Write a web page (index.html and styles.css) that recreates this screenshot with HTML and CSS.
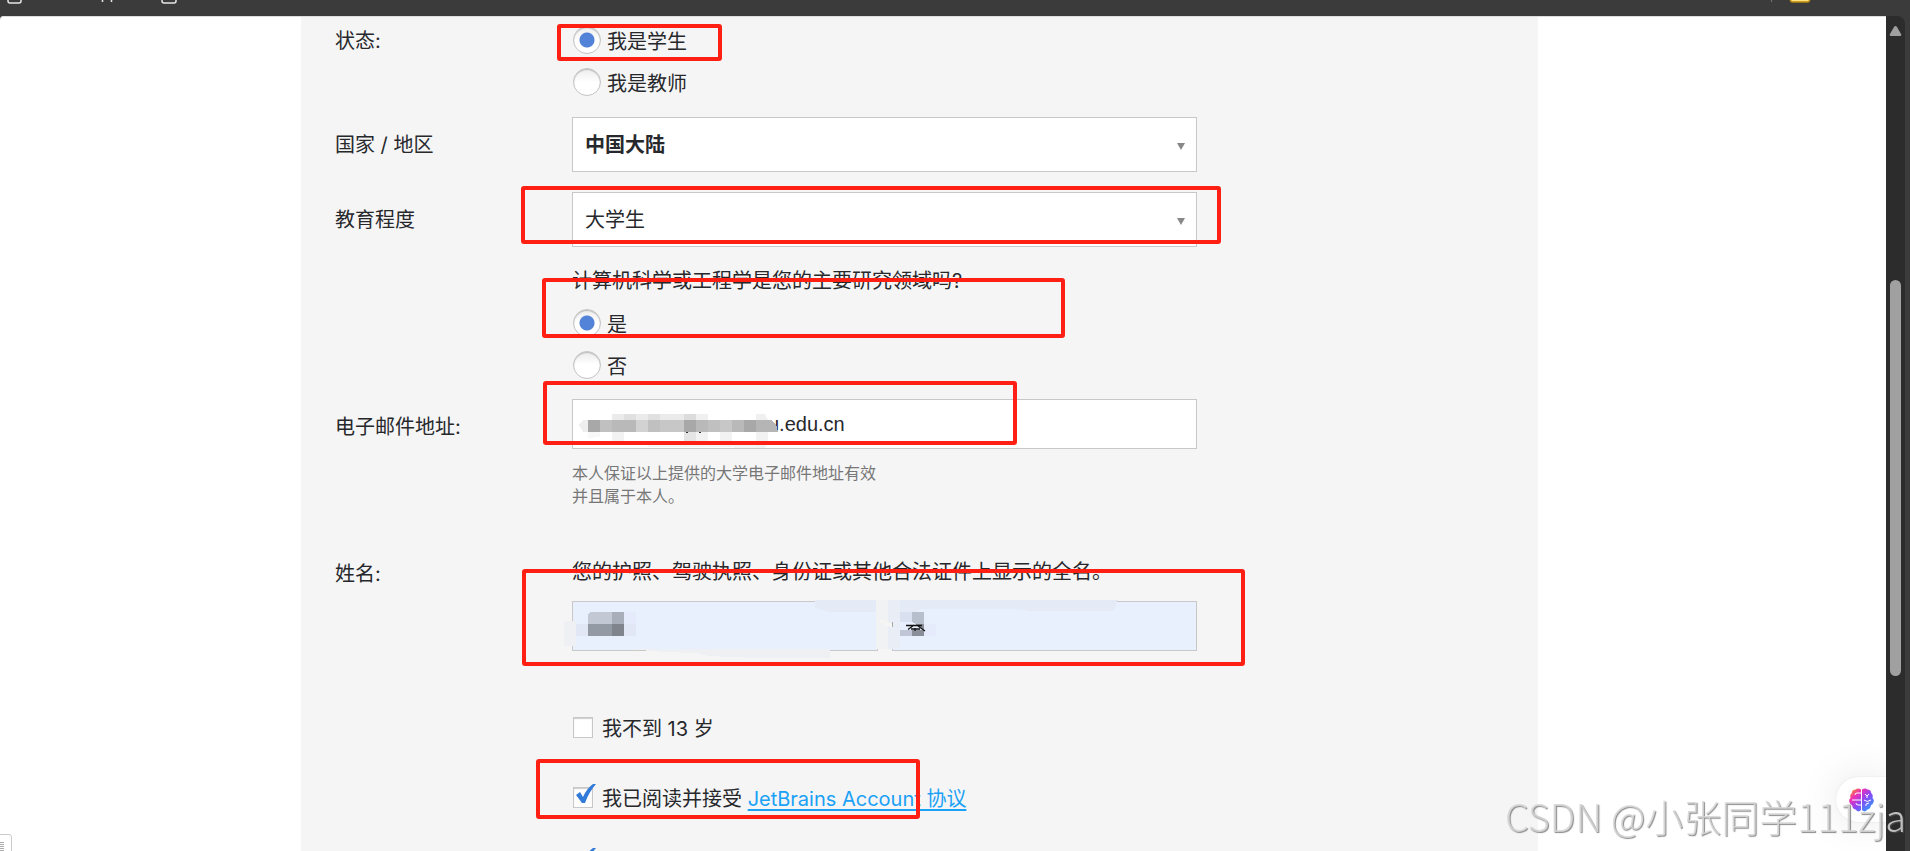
FILE: index.html
```html
<!DOCTYPE html>
<html lang="zh-CN">
<head>
  <meta charset="UTF-8">
  <meta name="viewport" content="width=device-width, initial-scale=1.0">
  <title>JetBrains 学生授权申请</title>
  <link rel="stylesheet" href="styles.css">
</head>
<body>

  <header class="toolbar">
    <svg class="toolbar-left" width="190" height="6" fill="none" stroke="#e6e6e6" stroke-width="1.5">
      <path d="M8 -4V1Q8 3 10 3H19Q21 3 21 1V-4M102.5 0V2M111.5 0V2M162 -4V1Q162 3 164 3H174Q176 3 176 1V-4"/>
    </svg>
    <svg class="toolbar-right" width="50" height="6">
      <path d="M1.500 0V2" stroke="#777"/>
      <rect x="20.500" y="-8" width="19" height="10" rx="2" fill="#ffe07a" stroke="#b98a12" stroke-width="1.500"/>
    </svg>
  </header>

  <div class="viewport">
    <main class="page">
      <form class="panel">

        <div class="row row-status">
          <span class="row-label" id="statusLabel">状态:</span>
          <div class="field" role="radiogroup" aria-labelledby="statusLabel">
            <label class="choice"><input type="radio" name="status" checked>我是学生</label>
            <label class="choice"><input type="radio" name="status">我是教师</label>
          </div>
        </div>

        <div class="row row-country">
          <label class="row-label" for="country">国家 / 地区</label>
          <div class="field select-box">
            <select id="country" class="strong"><option>中国大陆</option></select>
            <svg class="arrow" width="8" height="7"><path d="M0 0H8L4 7Z" fill="#888"/></svg>
          </div>
        </div>

        <div class="row row-level">
          <label class="row-label" for="level">教育程度</label>
          <div class="field select-box">
            <select id="level"><option>大学生</option></select>
            <svg class="arrow" width="8" height="7"><path d="M0 0H8L4 7Z" fill="#888"/></svg>
          </div>
        </div>

        <div class="row row-major">
          <div class="field" role="radiogroup" aria-labelledby="majorLabel">
            <p class="question" id="majorLabel">计算机科学或工程学是您的主要研究领域吗?</p>
            <label class="choice"><input type="radio" name="major" checked>是</label>
            <label class="choice"><input type="radio" name="major">否</label>
          </div>
        </div>

        <div class="row row-email">
          <label class="row-label" for="email">电子邮件地址:</label>
          <div class="field">
            <div class="masked">
              <input type="text" id="email" class="text-input email-input" value="u.edu.cn">
              <svg class="mosaic" width="625" height="50" shape-rendering="crispEdges">
                <path d="M7 26L11 21H16V33H11Z" fill="#eee"/>
                <path d="M16 33H28V38L16 39Z" fill="#f8f8f8"/>
                <path d="M40 15H52V21H40ZM64 15H76V21H64ZM88 15H112V21H88Z" fill="#ebebeb"/>
                <path d="M52 15H64V21H52ZM76 15H88V21H76Z" fill="#e0e0e0"/>
                <path d="M112 15H124V21H112Z" fill="#dcdcdc"/>
                <path d="M124 15H136V21H124ZM184 15H193L196 21H184Z" fill="#f0f0f0"/>
                <path d="M40 33H52V42H40ZM124 33H136V42H124ZM148 33H160V42H148ZM184 33H196V44L193 49H184Z" fill="#f2f2f2"/>
                <path d="M112 33H124V42H112Z" fill="#e5e5e5"/>
                <path d="M74 46H184V49H164L160 48H77Z" fill="#f5f5f5"/>
                <path d="M16 21H28V33H16ZM112 21H124V33H112ZM172 21H184V33H172Z" fill="#a8a8a8"/>
                <path d="M28 21H40V33H28ZM76 21H88V33H76ZM136 21H148V33H136Z" fill="#c0c0c0"/>
                <path d="M40 21H64V33H40ZM124 21H136V33H124ZM160 21H172V33H160Z" fill="#b9b9b9"/>
                <path d="M64 21H76V33H64Z" fill="#d2d2d2"/>
                <path d="M88 21H112V33H88ZM148 21H160V33H148Z" fill="#c7c7c7"/>
                <path d="M184 21H199L204 25L206 33H184Z" fill="#b5b5b5"/>
                <path d="M114 33H116M127 33H129" stroke="#333"/>
              </svg>
            </div>
            <p class="hint">本人保证以上提供的大学电子邮件地址有效<br>并且属于本人。</p>
          </div>
        </div>

        <div class="row row-name">
          <label class="row-label" for="firstName">姓名:</label>
          <div class="field">
            <p class="question">您的护照、驾驶执照、身份证或其他合法证件上显示的全名。</p>
            <div class="masked name-inputs">
              <input type="text" id="firstName" class="text-input filled" aria-label="名">
              <input type="text" id="lastName" class="text-input filled" aria-label="姓">
              <svg class="mosaic" width="625" height="50" shape-rendering="crispEdges">
                <path d="M-8 20H4V45H-8Z" fill="#eff0f3"/>
                <path d="M243 -1H304V11H257L243 7Z" fill="#e4ebf7"/>
                <path d="M56 48H258V57H183L137 55L125 52L92 51Z" fill="#eff0f4"/>
                <path d="M304 -1H316V48H304Z" fill="#f1f2f3"/>
                <path d="M316 -1H328V48H316Z" fill="#e8edf6"/>
                <path d="M328 -1H546L542 10H460L440 8H350L344 11H328Z" fill="#e4ebf7"/>
                <path d="M304 20L311 19L320 23V27Z" fill="#f5f5f3"/>
                <path d="M320.500 21V26" stroke="#aaa"/>
                <path d="M4 23H16V35H4ZM52 23H64V35H52Z" fill="#e1e7f4"/>
                <path d="M52 11H64V23H52ZM352 23H364V35H352Z" fill="#e5ebfa"/>
                <path d="M16 13L18 11H40V23H16Z" fill="#c2c8d4"/>
                <path d="M40 11H52V23H40Z" fill="#a9afba"/>
                <path d="M16 23H40V35H16Z" fill="#949aa4"/>
                <path d="M40 23H52V35H40Z" fill="#80848d"/>
                <path d="M328 11H340V23H328Z" fill="#d9e0ef"/>
                <path d="M340 11H352V23H340Z" fill="#b8bfcc"/>
                <path d="M328 23H340V35H328Z" fill="#c0c6d5"/>
                <path d="M340 23H352V35H340Z" fill="#898e99"/>
                <path d="M328 21H340L347 25L351 29H328Z" fill="#e8eefb"/>
                <path d="M334 24.500H350M342 24L336 28.500M339 28H348M343 27V30M346 25L353 30" stroke="#111" stroke-width="1.300" fill="none" shape-rendering="auto"/>
              </svg>
            </div>
          </div>
        </div>

        <div class="row row-checks">
          <div class="field">
            <label class="choice"><input type="checkbox">我不到 13 岁</label>
            <div class="choice choice-agree">
              <input type="checkbox" id="agree" checked>
              <svg class="tick" width="20" height="20"><path d="M1 11L5 8L8 13Q12 4 18 0H21Q14 8 10 19H7Z" fill="#327bd8"/></svg>
              <label for="agree">我已阅读并接受 <a href="#">JetBrains Account 协议</a></label>
            </div>
            <div class="choice choice-news">
              <input type="checkbox" id="news" aria-label="订阅" checked>
              <svg class="tick" width="20" height="20"><path d="M1 11L5 8L8 13Q12 4 18 0H21Q14 8 10 19H7Z" fill="#327bd8"/></svg>
            </div>
          </div>
        </div>

        <!-- 红框标注 -->
        <div class="mark mark-status"></div>
        <div class="mark mark-level"></div>
        <div class="mark mark-major"></div>
        <div class="mark mark-email"></div>
        <div class="mark mark-name"></div>
        <div class="mark mark-agree"></div>
      </form>

      <div class="corner-box">
        <svg width="4" height="10" stroke="#aaa"><path d="M0 .5H4M0 2.500H4M0 4.500H4M0 6.500H4M0 8.500H4"/></svg>
      </div>

      <button type="button" class="assistant" aria-label="AI 助手">
        <svg width="25" height="24" viewBox="0 0 25 24">
          <defs>
            <linearGradient id="brain" x1="0" y1="0" x2="1" y2="1">
              <stop offset="0" stop-color="#ffb000"/>
              <stop offset=".28" stop-color="#ee2fb4"/>
              <stop offset=".55" stop-color="#8a48f5"/>
              <stop offset="1" stop-color="#18b4ff"/>
            </linearGradient>
          </defs>
          <path fill="url(#brain)" d="M12 1.500Q9-.5 6.500 1.500Q3 1.500 2.800 5Q.5 7 1.500 10Q-.8 12 .8 15Q1.500 17 3 17Q3.500 21 6.500 21.500Q9.500 25 12 22ZM13 1.500Q16-.5 18.500 1.500Q22 1.500 22.200 5Q24.500 7 23.500 10Q25.800 12 24.200 15Q23.500 17 22 17Q21.500 21 18.500 21.500Q15.500 25 13 22Z"/>
          <path fill="none" stroke="#fff" stroke-width="1" d="M12 5H8Q6 5 6 7M12 12H3M12 17H9Q7 17 7 15M16 6L18 8V10M18 8L20 6M15 12Q18 15 22 12M17 18V16L20 15"/>
        </svg>
      </button>
    </main>

    <div class="scrollbar">
      <svg width="13" height="10"><path d="M5 1Q6.500 -1 8 1L12 8Q13 10 11 10H2Q0 10 1 8Z" fill="#a0a0a0"/></svg>
      <div class="thumb"></div>
    </div>
  </div>

  <div class="watermark">CSDN @小张同学111zja</div>

</body>
</html>
```
FILE: styles.css
```css
* {
  box-sizing: border-box;
}

body {
  margin: 0;
  height: 100vh;
  display: flex;
  flex-direction: column;
  overflow: hidden;
  background-color: #3b3b3b;
  color: #27282c;
  font-family: Inter, "Noto Sans CJK SC", sans-serif;
  font-size: 20px;
}

p {
  margin: 0;
}

svg {
  display: block;
}

input, select {
  margin: 0;
  color: inherit;
  font-family: "Liberation Sans", "Noto Sans CJK SC", sans-serif;
  font-size: 20px;
}

a {
  color: #1ba1f5;
  text-decoration: underline;
  text-decoration-thickness: 2px;
  text-underline-offset: 3px;
}

.toolbar {
  flex: none;
  height: 16px;
  display: flex;
  justify-content: space-between;
}

.toolbar-right {
  margin-right: 90px;
}

.viewport {
  flex: 1;
  min-height: 0;
  display: flex;
  padding-right: 5px;
}

.page {
  position: relative;
  flex: 1;
  display: grid;
  grid-template-columns: 301fr 1237fr 348fr;
  overflow: hidden;
  background-color: #fff;
  border-radius: 4px 0 0 0;
  box-shadow: inset 0 1px #ddd;
}

/* 表单 */
.panel {
  position: relative;
  grid-column: 2;
  padding: 3px 34px 0;
  background-color: #f5f5f5;
  box-shadow: inset 0 1px #ddd;
}

.row {
  display: grid;
  grid-template-columns: 237px minmax(0, 625px);
}

.row-label {
  line-height: 44px;
}

.field {
  grid-column: 2;
}

.row-country {
  margin-top: 14px;
}

.row-level {
  margin-top: 18px;
}

.row-country .row-label,
.row-level .row-label,
.row-email .row-label {
  line-height: 57px;
}

.row-major {
  margin-top: 12px;
}

.row-email {
  margin-top: 13px;
}

.row-name {
  margin-top: 44px;
}

.row-checks {
  margin-top: 55px;
}

.question {
  line-height: 41px;
  white-space: nowrap;
}

.hint {
  margin-top: 13px;
  color: #777;
  font-size: 16px;
  line-height: 23px;
}

.choice {
  position: relative;
  height: 42px;
  display: flex;
  align-items: center;
}

.choice-agree {
  margin-top: 28px;
}

.choice-news {
  margin-top: 22px;
}

input[type="radio"] {
  appearance: none;
  width: 28px;
  height: 28px;
  margin: 0 6px 0 1px;
  border: 1px solid #c4c4c4;
  border-radius: 50%;
  background: linear-gradient(#ececec, #fff 50%);
  box-shadow: inset 0 1px 1px #bbb;
}

input[type="radio"]:checked {
  background: radial-gradient(circle, #5283d8 7px, transparent 8px), linear-gradient(#ececec, #fff 50%);
}

input[type="checkbox"] {
  appearance: none;
  width: 20px;
  height: 21px;
  margin: 0 9px 0 1px;
  border: 1px solid #c8c8c8;
  background-color: #fff;
  box-shadow: inset 0 1px 1px #ccc;
}

.tick {
  position: absolute;
  left: 3px;
  top: 8px;
  overflow: visible;
  pointer-events: none;
}

.select-box {
  position: relative;
}

select {
  appearance: none;
  display: block;
  width: 100%;
  height: 55px;
  padding: 0 40px 0 12px;
  border: 1px solid #c8c8c8;
  border-radius: 0;
  background-color: #fff;
}

.strong {
  font-weight: bold;
}

.arrow {
  position: absolute;
  right: 12px;
  top: 26px;
  pointer-events: none;
}

.text-input {
  display: block;
  width: 100%;
  height: 50px;
  border: 1px solid #c8c8c8;
  border-radius: 0;
  background-color: #fff;
}

.email-input {
  padding: 0 12px 0 195px;
}

.filled {
  background-color: #e8effd;
}

.name-inputs {
  display: grid;
  grid-template-columns: 1fr 1fr;
  gap: 14px;
  margin-top: 8px;
}

.masked {
  position: relative;
}

.mosaic {
  position: absolute;
  left: 0;
  top: 0;
  overflow: visible;
  pointer-events: none;
}

/* 标注框 */
.mark {
  position: absolute;
  border: 4px solid #ff2013;
  border-radius: 3px;
  pointer-events: none;
}

.mark-status {
  left: 256px;
  top: 8px;
  width: 165px;
  height: 37px;
}

.mark-level {
  left: 220px;
  top: 170px;
  width: 700px;
  height: 58px;
}

.mark-major {
  left: 241px;
  top: 262px;
  width: 523px;
  height: 60px;
}

.mark-email {
  left: 242px;
  top: 365px;
  width: 474px;
  height: 64px;
}

.mark-name {
  left: 221px;
  top: 553px;
  width: 723px;
  height: 97px;
}

.mark-agree {
  left: 235px;
  top: 743px;
  width: 384px;
  height: 60px;
}

.corner-box {
  position: absolute;
  left: -1px;
  bottom: -1px;
  width: 13px;
  height: 18px;
  padding-top: 7px;
  border: 1px solid #ccc;
  border-radius: 0 3px 0 0;
  background-color: #fff;
}

.assistant {
  position: absolute;
  right: 0;
  bottom: 29px;
  width: 50px;
  height: 45px;
  padding: 0 0 0 13px;
  border: none;
  border-radius: 23px 0 0 23px;
  background-color: #fff;
  box-shadow: 0 0 40px rgba(0, 0, 0, 0.1), 0 0 2px rgba(0, 0, 0, 0.1);
}

.scrollbar {
  width: 19px;
  padding: 10px 4px 0 3px;
  border-radius: 0 8px 0 0;
  background-color: #2c2c2c;
}

.thumb {
  width: 11px;
  height: 48%;
  margin: 244px 0 0 1px;
  border-radius: 6px;
  background-color: #a0a0a0;
}

.watermark {
  position: fixed;
  right: 4px;
  bottom: 8px;
  color: rgba(215, 215, 215, 0.85);
  font-family: "Noto Sans CJK SC", sans-serif;
  font-size: 38px;
  font-weight: 300;
  line-height: 54px;
  text-shadow: 1px 1px 1px rgba(90, 90, 90, 0.7);
  white-space: nowrap;
  pointer-events: none;
}
```
